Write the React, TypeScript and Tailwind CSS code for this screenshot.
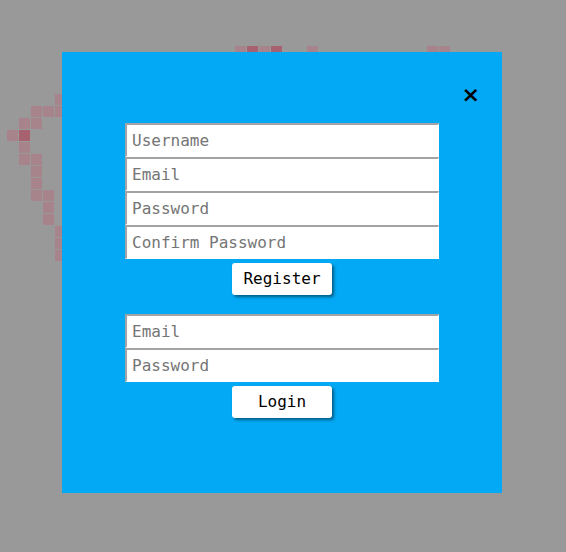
import React from 'react';

// pixel-art trail behind the modal: [x, y, dark]
const CELLS: [number, number, boolean][] = [
  [235, 46, false], [247, 46, true], [259, 46, false], [271, 46, true], [307, 46, false],
  [427, 46, false], [439, 46, false],
  [55, 94, false],
  [31, 106, false], [43, 106, false], [55, 106, false],
  [19, 118, false], [31, 118, false],
  [7, 130, false], [19, 130, true],
  [19, 142, false],
  [19, 154, false], [31, 154, false],
  [31, 166, false],
  [31, 178, false],
  [31, 190, false], [43, 190, false],
  [43, 202, false],
  [43, 214, false],
  [55, 226, false],
  [55, 238, false],
  [55, 250, false],
];

const font = { fontFamily: '"DejaVu Sans Mono", "Liberation Mono", monospace' };

const Field = ({ placeholder }: { placeholder: string }) => (
  <input
    placeholder={placeholder}
    className="h-[34px] w-[314px] border-t-2 border-l-2 border-b border-r border-t-[#a3a3a3] border-l-[#a3a3a3] border-b-white border-r-white bg-white px-[5px] text-[16px] text-black outline-none placeholder:text-[#757575]"
    style={font}
  />
);

const Button = ({ label }: { label: string }) => (
  <button
    className="h-[32px] w-[100px] rounded-[3px] bg-white text-[16px] text-black shadow-[2px_2px_3px_rgba(0,0,0,0.45)]"
    style={font}
  >
    {label}
  </button>
);

export default function App() {
  return (
    <div className="relative h-[552px] w-[566px] overflow-hidden bg-[#999999]">
      {CELLS.map(([x, y, dark], i) => (
        <div
          key={i}
          className={`absolute h-[11px] w-[11px] ${dark ? 'bg-[#a8616f]' : 'bg-[#a7838b]'}`}
          style={{ left: x, top: y }}
        />
      ))}
      <div className="relative ml-[62px] mt-[52px] flex h-[441px] w-[440px] flex-col items-center bg-[#03a9f4] pt-[71px]">
        <button
          className="absolute right-[22px] top-[32px] text-[22px] font-bold leading-none text-black"
          style={{ fontFamily: '"DejaVu Sans", sans-serif' }}
        >
          ×
        </button>
        <div className="flex flex-col items-center">
          <Field placeholder="Username" />
          <Field placeholder="Email" />
          <Field placeholder="Password" />
          <Field placeholder="Confirm Password" />
          <div className="mt-[4px]">
            <Button label="Register" />
          </div>
        </div>
        <div className="mt-[19px] flex flex-col items-center">
          <Field placeholder="Email" />
          <Field placeholder="Password" />
          <div className="mt-[4px]">
            <Button label="Login" />
          </div>
        </div>
      </div>
    </div>
  );
}
